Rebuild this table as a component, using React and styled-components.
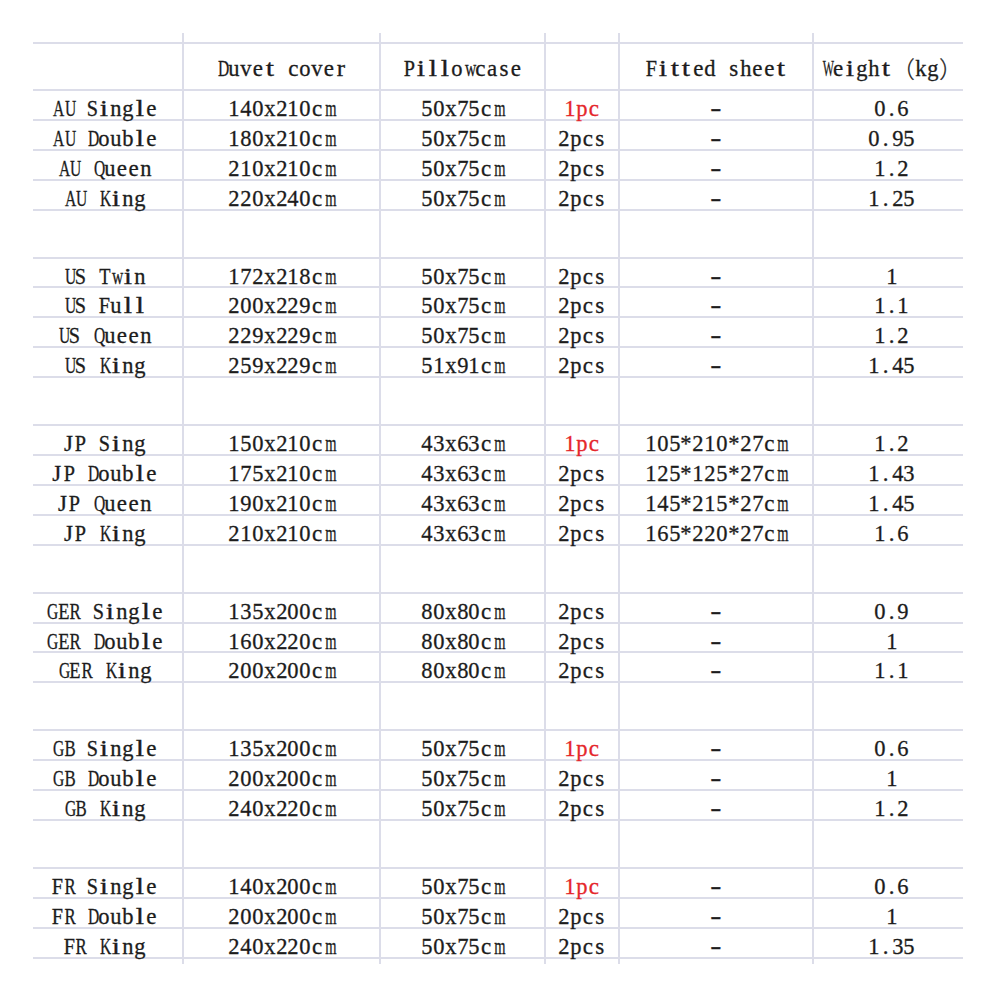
import styled, { createGlobalStyle } from "styled-components";

const GlobalStyle = createGlobalStyle`
  html, body {
    margin: 0;
    padding: 0;
    background: #ffffff;
  }
`;

const COLS = "149px 197px 165px 74px 194px 151px";
const LINE = "#dcdde9";
const CELL = 11.85; // advance of one half-width character, like a SimSun sheet
const FONT_SIZE = 23;

const groups = [
  [
    ["AU Single", "140x210cm", "50x75cm", "1pc", "-", "0.6"],
    ["AU Double", "180x210cm", "50x75cm", "2pcs", "-", "0.95"],
    ["AU Queen", "210x210cm", "50x75cm", "2pcs", "-", "1.2"],
    ["AU King", "220x240cm", "50x75cm", "2pcs", "-", "1.25"],
  ],
  [
    ["US Twin", "172x218cm", "50x75cm", "2pcs", "-", "1"],
    ["US Full", "200x229cm", "50x75cm", "2pcs", "-", "1.1"],
    ["US Queen", "229x229cm", "50x75cm", "2pcs", "-", "1.2"],
    ["US King", "259x229cm", "51x91cm", "2pcs", "-", "1.45"],
  ],
  [
    ["JP Sing", "150x210cm", "43x63cm", "1pc", "105*210*27cm", "1.2"],
    ["JP Double", "175x210cm", "43x63cm", "2pcs", "125*125*27cm", "1.43"],
    ["JP Queen", "190x210cm", "43x63cm", "2pcs", "145*215*27cm", "1.45"],
    ["JP King", "210x210cm", "43x63cm", "2pcs", "165*220*27cm", "1.6"],
  ],
  [
    ["GER Single", "135x200cm", "80x80cm", "2pcs", "-", "0.9"],
    ["GER Double", "160x220cm", "80x80cm", "2pcs", "-", "1"],
    ["GER King", "200x200cm", "80x80cm", "2pcs", "-", "1.1"],
  ],
  [
    ["GB Single", "135x200cm", "50x75cm", "1pc", "-", "0.6"],
    ["GB Double", "200x200cm", "50x75cm", "2pcs", "-", "1"],
    ["GB King", "240x220cm", "50x75cm", "2pcs", "-", "1.2"],
  ],
  [
    ["FR Single", "140x200cm", "50x75cm", "1pc", "-", "0.6"],
    ["FR Double", "200x200cm", "50x75cm", "2pcs", "-", "1"],
    ["FR King", "240x220cm", "50x75cm", "2pcs", "-", "1.35"],
  ],
];

// measure serif glyphs so every one fits a fixed cell
let ctx = null;
const cache = {};
function glyphWidth(ch) {
  if (cache[ch] != null) return cache[ch];
  if (!ctx) {
    ctx = document.createElement("canvas").getContext("2d");
    ctx.font = `${FONT_SIZE}px "Liberation Serif"`;
  }
  cache[ch] = ctx.measureText(ch).width;
  return cache[ch];
}

function glyphScale(ch) {
  if (ch === "-") return 1.45;
  const w = glyphWidth(ch);
  if (w > CELL - 0.6) return (CELL - 0.6) / w;
  if (/[a-z]/.test(ch) && w < CELL * 0.7) return Math.min(1.3, (CELL * 0.7) / w);
  return 1;
}

function MonoText({ text, red }) {
  return (
    <Text $red={red}>
      {[...text].map((ch, i) => {
        const wide = ch === "（" || ch === "）";
        const scale = wide ? 1 : glyphScale(ch);
        return (
          <Glyph
            key={i}
            $wide={wide}
            style={scale !== 1 ? { transform: `scaleX(${scale.toFixed(3)})` } : undefined}
          >
            {ch}
          </Glyph>
        );
      })}
    </Text>
  );
}

function Row({ cells, $kind }) {
  return (
    <RowBox $kind={$kind}>
      {cells.map((c, i) => (
        <Cell key={i} $col={i} $kind={$kind}>
          {c && <MonoText text={c} red={c === "1pc"} />}
        </Cell>
      ))}
    </RowBox>
  );
}

const empty = ["", "", "", "", "", ""];

export default function App() {
  return (
    <>
      <GlobalStyle />
      <Page>
        <Sheet>
          <Row cells={empty} $kind="stubTop" />
          <Row
            cells={["", "Duvet cover", "Pillowcase", "", "Fitted sheet", "Weight（kg）"]}
            $kind="header"
          />
          {groups.map((g, gi) => (
            <Group key={gi}>
              {gi > 0 && <Row cells={empty} $kind="spacer" />}
              {g.map((r) => (
                <Row key={r[0]} cells={r} $kind="data" />
              ))}
            </Group>
          ))}
          <Row cells={empty} $kind="stubBottom" />
        </Sheet>
      </Page>
    </>
  );
}

const Page = styled.div`
  width: 1000px;
  height: 1000px;
  padding: 33px 0 0 33px;
  box-sizing: border-box;
  background: #fff;
`;

const Sheet = styled.div`
  width: 930px;
  display: flex;
  flex-direction: column;
`;

const Group = styled.div`
  display: contents;
`;

const heights = {
  stubTop: "10px",
  header: "49px",
  spacer: "48px",
  data: "29.9px",
  stubBottom: "5px",
};

const RowBox = styled.div`
  display: grid;
  grid-template-columns: ${COLS};
  height: ${(p) => heights[p.$kind]};
  box-sizing: border-box;
  border-top: ${(p) => (p.$kind === "header" ? `2px solid ${LINE}` : "none")};
  border-bottom: ${(p) =>
    p.$kind === "stubTop" || p.$kind === "stubBottom"
      ? "none"
      : `2px solid ${LINE}`};
  margin-top: ${(p) => (p.$kind === "header" ? "-1px" : "0")};
`;

const Cell = styled.div`
  display: flex;
  align-items: center;
  justify-content: center;
  border-left: ${(p) => (p.$col > 0 ? `2px solid ${LINE}` : "none")};
  padding-top: ${(p) => (p.$kind === "data" ? "6px" : "4px")};
  padding-right: ${(p) => (p.$col === 0 ? "7px" : "0")};
  padding-left: ${(p) => (p.$col === 5 ? "6px" : "0")};
  box-sizing: border-box;
  white-space: nowrap;
`;

const Text = styled.span`
  display: inline-flex;
  font-family: "Liberation Serif", "Noto Sans CJK SC", serif;
  font-size: ${FONT_SIZE}px;
  line-height: 1;
  color: ${(p) => (p.$red ? "#e5262b" : "#1c1c1c")};
  -webkit-text-stroke: 0.3px ${(p) => (p.$red ? "#e5262b" : "#1c1c1c")};
`;

const Glyph = styled.span`
  display: inline-block;
  width: ${(p) => (p.$wide ? CELL * 2 : CELL)}px;
  text-align: center;
  white-space: pre;
  font-family: ${(p) =>
    p.$wide ? '"Noto Sans CJK SC", sans-serif' : '"Liberation Serif", serif'};
  font-weight: ${(p) => (p.$wide ? 300 : 400)};
`;
